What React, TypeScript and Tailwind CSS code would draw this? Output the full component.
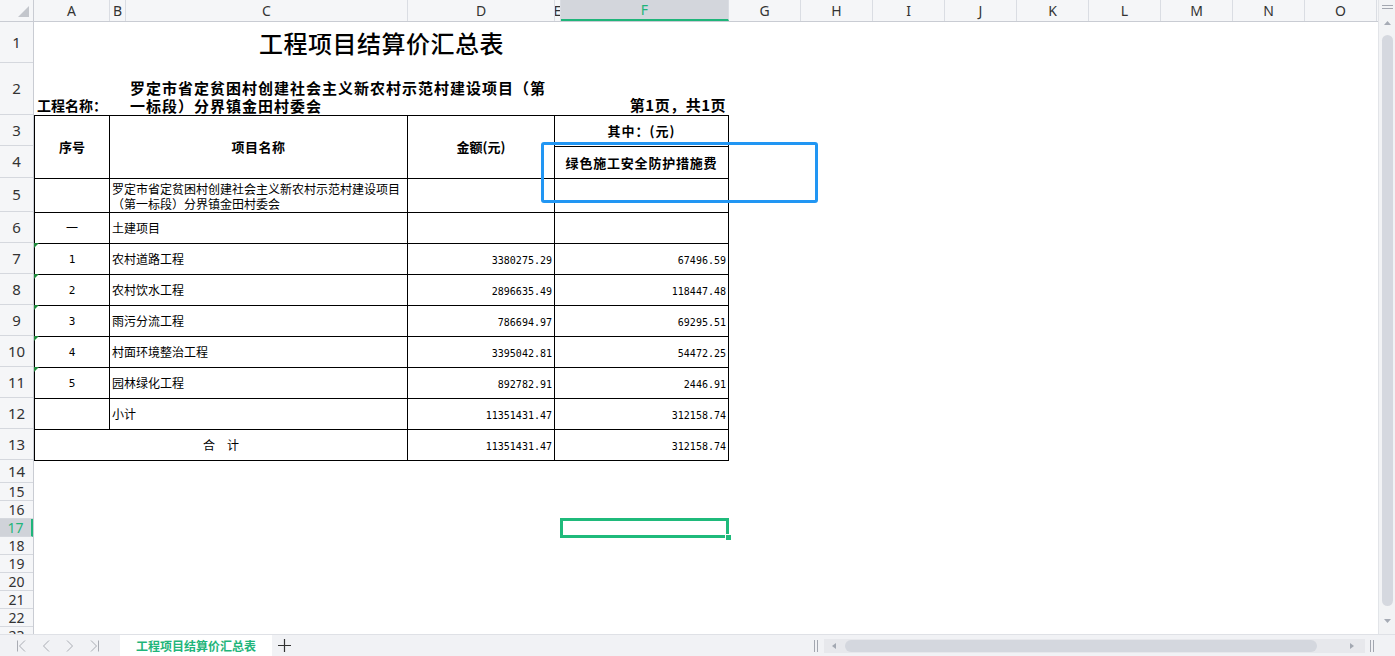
import React from 'react';

const cjk = "font-['Noto_Sans_CJK_SC',sans-serif]";
const mono = "font-['DejaVu_Sans_Mono','Liberation_Mono',monospace]";
const cell = 'border-black border-r border-b flex items-center';

const columns = [
  { label: 'A', w: 'w-[76px]' },
  { label: 'B', w: 'w-[16px]' },
  { label: 'C', w: 'w-[282px]' },
  { label: 'D', w: 'w-[147px]' },
  { label: 'E', w: 'w-[6px]' },
  { label: 'F', w: 'w-[168px]', active: true },
  { label: 'G', w: 'w-[72px]' },
  { label: 'H', w: 'w-[72px]' },
  { label: 'I', w: 'w-[72px]' },
  { label: 'J', w: 'w-[72px]' },
  { label: 'K', w: 'w-[72px]' },
  { label: 'L', w: 'w-[72px]' },
  { label: 'M', w: 'w-[72px]' },
  { label: 'N', w: 'w-[72px]' },
  { label: 'O', w: 'w-[72px]' },
];

const rowHeads = [
  { n: 1, h: 'h-[41px]' },
  { n: 2, h: 'h-[52px]' },
  { n: 3, h: 'h-[31px]' },
  { n: 4, h: 'h-[32px]' },
  { n: 5, h: 'h-[34px]' },
  ...Array.from({ length: 8 }, (_, i) => ({ n: 6 + i, h: 'h-[31px]' })),
  { n: 14, h: 'h-[23px]' },
  ...Array.from({ length: 9 }, (_, i) => ({ n: 15 + i, h: 'h-[18px]' })),
];

const items = [
  { no: '1', name: '农村道路工程', amount: '3380275.29', green: '67496.59' },
  { no: '2', name: '农村饮水工程', amount: '2896635.49', green: '118447.48' },
  { no: '3', name: '雨污分流工程', amount: '786694.97', green: '69295.51' },
  { no: '4', name: '村面环境整治工程', amount: '3395042.81', green: '54472.25' },
  { no: '5', name: '园林绿化工程', amount: '892782.91', green: '2446.91' },
];

function Money({ value, wide }: { value: string; wide?: boolean }) {
  return (
    <div className={`${cell} ${wide ? 'col-span-2' : ''} justify-end pr-[2px] pt-[3px] ${mono} text-[10px]`}>
      {value}
    </div>
  );
}

function SummaryTable() {
  return (
    <div className="grid grid-cols-[76px_16px_282px_147px_6px_168px] grid-rows-[41px_52px_32px_32px_34px_repeat(8,31px)] text-black">
      {/* row 1 */}
      <div className={`col-span-6 flex items-center justify-center ${cjk} text-[24px] font-medium tracking-[0.5px]`}>
        工程项目结算价汇总表
      </div>

      {/* row 2 */}
      <div className={`flex items-end pl-[3px] pb-[1px] ${cjk} text-[14px] font-bold leading-[18px]`}>工程名称：</div>
      <div />
      <div className={`col-span-2 flex items-end pl-[4px] ${cjk} text-[15px] font-bold leading-[18px] tracking-[1px]`}>
        罗定市省定贫困村创建社会主义新农村示范村建设项目（第一标段）分界镇金田村委会
      </div>
      <div className={`col-span-2 flex items-end justify-end pr-[3px] pb-[1px] ${cjk} text-[15px] font-bold leading-[18px] tracking-[0.5px]`}>
        第1页，共1页
      </div>

      {/* rows 3-4 */}
      <div className={`${cell} border-l border-t row-span-2 justify-center ${cjk} text-[13px] font-bold`}>序号</div>
      <div className={`${cell} border-t row-span-2 col-span-2 justify-center ${cjk} text-[13px] font-bold tracking-[0.5px]`}>项目名称</div>
      <div className={`${cell} border-t row-span-2 justify-center ${cjk} text-[13px] font-bold`}>金额(元)</div>
      <div className={`${cell} border-t col-span-2 justify-center ${cjk} text-[13px] font-bold tracking-[1px]`}>其中：(元)</div>
      <div className={`${cell} col-span-2 justify-center ${cjk} text-[13px] font-bold tracking-[0.8px]`}>绿色施工安全防护措施费</div>

      {/* row 5 */}
      <div className={`${cell} border-l`} />
      <div className={`${cell} col-span-2 pl-[2px] ${cjk} text-[12px] leading-[15px]`}>
        罗定市省定贫困村创建社会主义新农村示范村建设项目（第一标段）分界镇金田村委会
      </div>
      <div className={cell} />
      <div className={`${cell} col-span-2`} />

      {/* row 6 */}
      <div className={`${cell} border-l justify-center ${cjk} text-[12px]`}>一</div>
      <div className={`${cell} col-span-2 pl-[2px] ${cjk} text-[12px]`}>土建项目</div>
      <div className={cell} />
      <div className={`${cell} col-span-2`} />

      {/* rows 7-11 */}
      {items.map((it) => (
        <React.Fragment key={it.no}>
          <div className={`${cell} border-l relative justify-center pt-[3px] ${mono} text-[11px]`}>
            <span className="absolute -left-px -top-px border-t-[5px] border-r-[5px] border-t-[#1f8a3c] border-r-transparent" />
            {it.no}
          </div>
          <div className={`${cell} col-span-2 pl-[2px] ${cjk} text-[12px]`}>{it.name}</div>
          <Money value={it.amount} />
          <Money value={it.green} wide />
        </React.Fragment>
      ))}

      {/* row 12 */}
      <div className={`${cell} border-l`} />
      <div className={`${cell} col-span-2 pl-[2px] ${cjk} text-[12px]`}>小计</div>
      <Money value="11351431.47" />
      <Money value="312158.74" wide />

      {/* row 13 */}
      <div className={`${cell} border-l col-span-3 justify-center ${cjk} text-[12px]`}>合　计</div>
      <Money value="11351431.47" />
      <Money value="312158.74" wide />
    </div>
  );
}

function Sheet() {
  return (
    <div className="flex-1 flex flex-col overflow-hidden bg-white">
      {/* column header */}
      <div className="flex h-[22px] shrink-0 bg-[#f5f6f8] border-b border-[#c9ccd3] font-['Noto_Sans',sans-serif] text-[14px] text-[#333]">
        <div className="w-[34px] shrink-0 border-r border-[#c9ccd3] flex items-end justify-end pr-[4px] pb-[4px]">
          <svg width="11" height="11" viewBox="0 0 11 11">
            <path d="M11 0 L11 11 L0 11 Z" fill="#c3c6cc" />
          </svg>
        </div>
        {columns.map((c) => (
          <div
            key={c.label}
            className={`${c.w} shrink-0 overflow-hidden flex items-center justify-center border-r border-[#dadde3] ${
              c.active ? 'bg-[#d3d6dc] text-[#1fb57a] border-b-2 border-b-[#1fb57a]' : ''
            }`}
          >
            {c.label}
          </div>
        ))}
      </div>

      <div className="flex flex-1 overflow-hidden">
        {/* row header */}
        <div className="w-[34px] shrink-0 flex flex-col bg-[#f5f6f8] border-r border-[#c9ccd3] font-['Noto_Sans',sans-serif] text-[#333]">
          {rowHeads.map((r) => (
            <div
              key={r.n}
              className={`${r.h} shrink-0 flex items-center justify-center border-b border-[#d5d8de] ${
                r.n > 14 ? 'text-[14px]' : 'text-[15px]'
              } ${r.n === 17 ? 'bg-[#d0d3d9] text-[#1fb57a] border-r-2 border-r-[#1fb57a]' : ''}`}
            >
              {r.n}
            </div>
          ))}
        </div>

        {/* cells */}
        <div className="relative flex-1 overflow-hidden">
          <SummaryTable />
          <div className="absolute left-[526px] top-[496px] w-[169px] h-[20px] border-[3px] border-[#1fba7b]">
            <div className="absolute -right-[6px] -bottom-[6px] w-[7px] h-[7px] bg-[#1fba7b] border border-white" />
          </div>
        </div>
      </div>
    </div>
  );
}

function VScroll() {
  return (
    <div className="w-[17px] shrink-0 bg-[#f2f3f5] border-l border-[#e2e4e8] flex flex-col items-center">
      <div className="mt-[5px] w-[11px] h-[4px] border-y border-[#a3a7b0]" />
      <svg className="mt-[12px]" width="7" height="4" viewBox="0 0 7 4">
        <path d="M0 4 L3.5 0 L7 4 Z" fill="#a6abb5" />
      </svg>
      <div className="mt-[10px] w-[11px] flex-1 rounded-full bg-[#d5d8df]" />
      <svg className="mt-[13px] mb-[11px]" width="7" height="4" viewBox="0 0 7 4">
        <path d="M0 0 L3.5 4 L7 0 Z" fill="#a6abb5" />
      </svg>
    </div>
  );
}

function TabBar() {
  return (
    <div className="h-[22px] shrink-0 flex items-stretch bg-[#f1f2f5] border-t border-[#dfe1e6]">
      <div className="w-[120px] flex items-center pl-[16px] gap-[16px] text-[#a9acb3]">
        <svg width="10" height="12" viewBox="0 0 10 12" fill="none" stroke="currentColor" strokeWidth="1">
          <path d="M1.5 0.5 V11.5 M9 0.5 L3.5 6 L9 11.5" />
        </svg>
        <svg width="8" height="12" viewBox="0 0 8 12" fill="none" stroke="currentColor" strokeWidth="1">
          <path d="M7 0.5 L1.5 6 L7 11.5" />
        </svg>
        <svg width="8" height="12" viewBox="0 0 8 12" fill="none" stroke="currentColor" strokeWidth="1">
          <path d="M1 0.5 L6.5 6 L1 11.5" />
        </svg>
        <svg width="10" height="12" viewBox="0 0 10 12" fill="none" stroke="currentColor" strokeWidth="1">
          <path d="M1 0.5 L6.5 6 L1 11.5 M8.5 0.5 V11.5" />
        </svg>
      </div>
      <div className={`w-[152px] bg-white flex items-center justify-center text-[#1fb57a] text-[12px] font-bold ${cjk}`}>
        工程项目结算价汇总表
      </div>
      <div className="w-[24px] flex items-center justify-center text-[#333]">
        <svg width="13" height="13" viewBox="0 0 13 13" fill="none" stroke="currentColor" strokeWidth="1.2">
          <path d="M6.5 0 V13 M0 6.5 H13" />
        </svg>
      </div>
      <div className="flex-1" />
      <div className="flex items-center">
        <div className="w-[4px] h-[12px] border-x border-[#a3a7b0] mr-[6px]" />
        <div className="w-[541px] h-[14px] bg-[#e7e8ec] flex items-center px-[8px]">
          <svg width="4" height="6" viewBox="0 0 4 6">
            <path d="M4 0 L0 3 L4 6 Z" fill="#a3a8b2" />
          </svg>
          <div className="ml-[9px] w-[472px] h-[12px] rounded-full bg-[#d4d7de]" />
          <div className="flex-1" />
          <svg width="4" height="6" viewBox="0 0 4 6" className="mr-[3px]">
            <path d="M0 0 L4 3 L0 6 Z" fill="#a3a8b2" />
          </svg>
        </div>
        <div className="w-[4px] h-[12px] border-x border-[#a3a7b0] ml-[5px] mr-[21px]" />
      </div>
    </div>
  );
}

export default function App() {
  return (
    <div className="relative w-[1395px] h-[656px] overflow-hidden flex flex-col bg-white">
      <div className="flex flex-1 overflow-hidden">
        <Sheet />
        <VScroll />
      </div>
      <TabBar />
      <div className="absolute left-[541px] top-[142px] w-[277px] h-[61px] border-[3px] border-[#2196f3] rounded-[3px]" />
    </div>
  );
}
